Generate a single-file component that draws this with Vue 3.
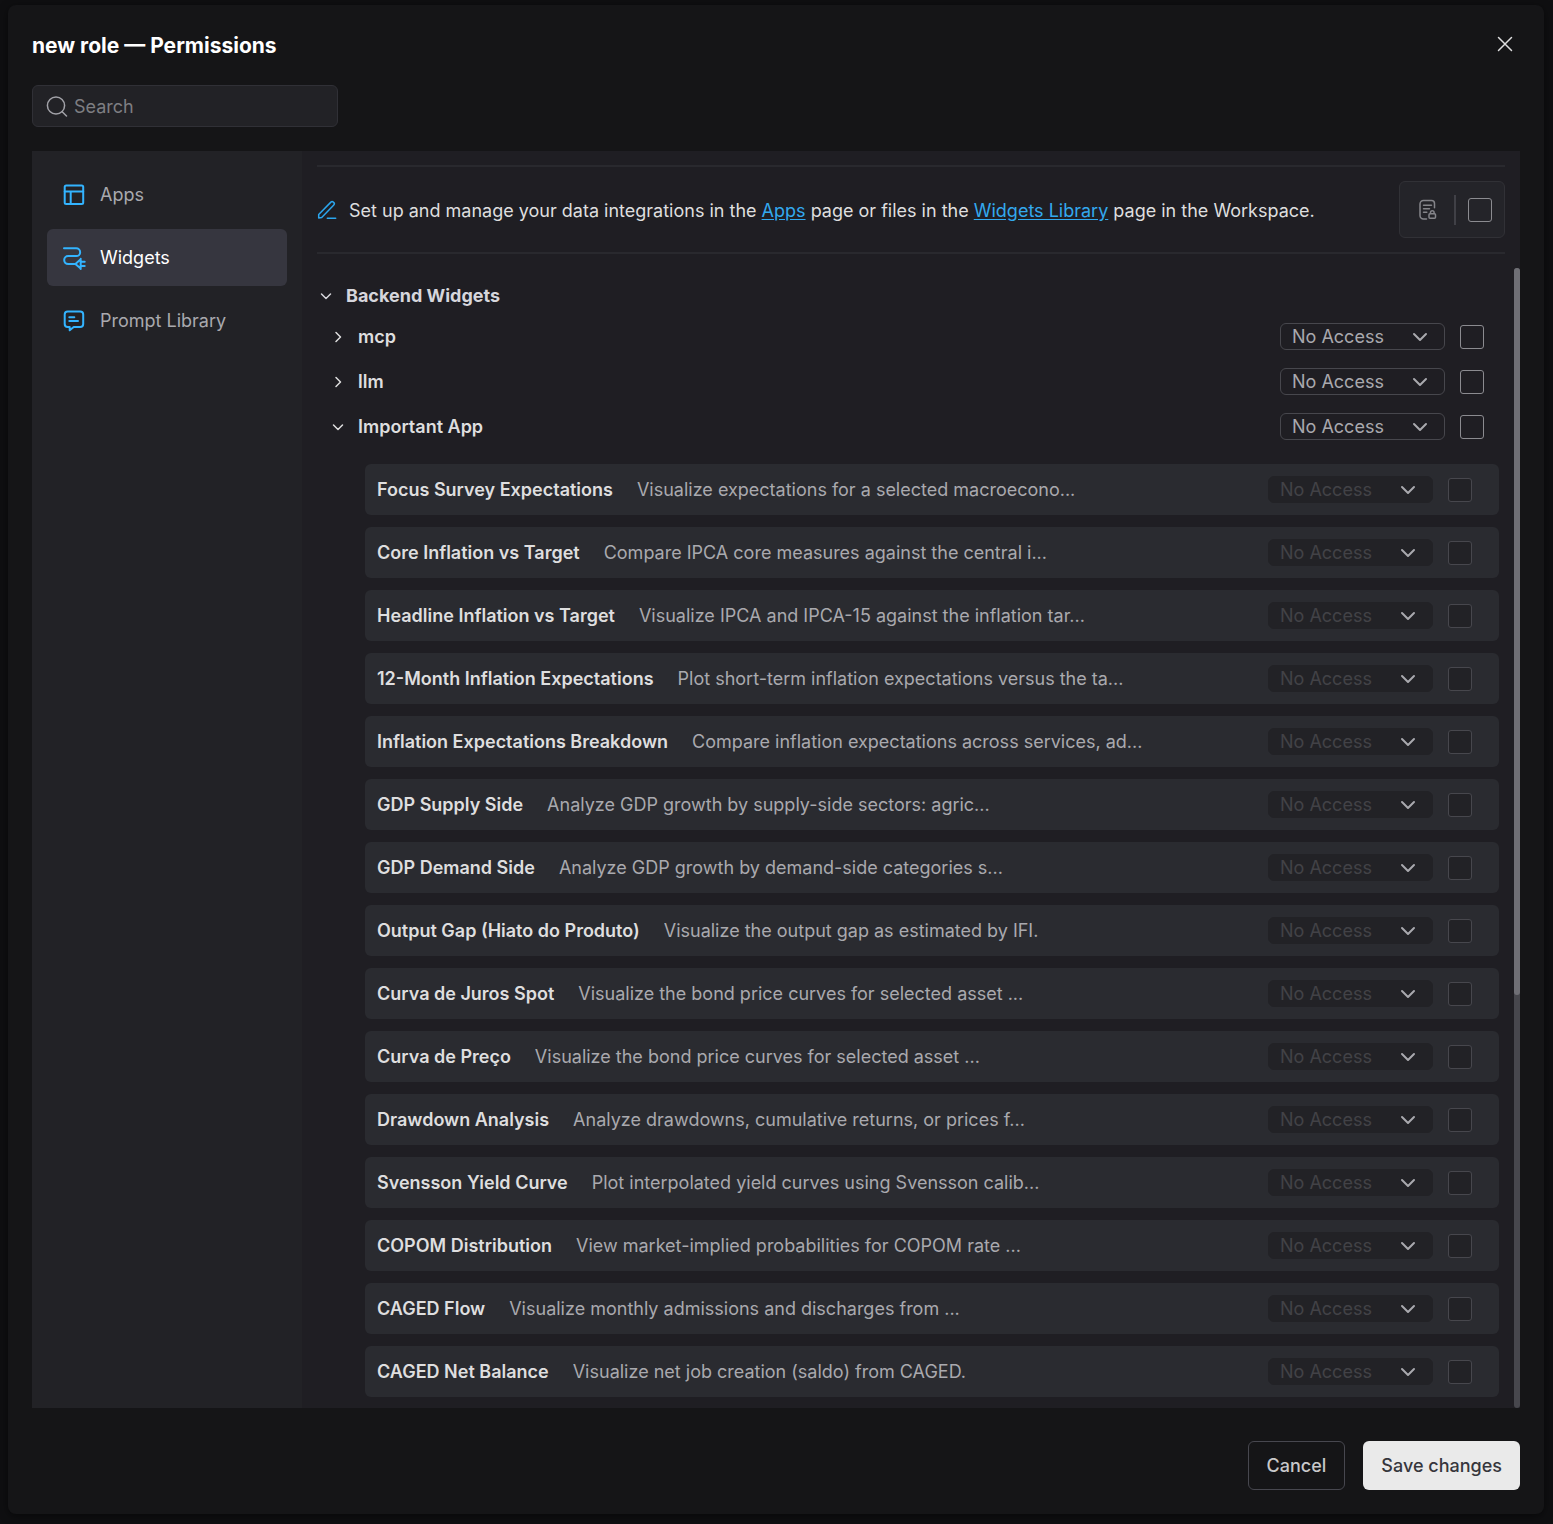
<script setup>
import { ref } from 'vue'

const search = ref( '' )
const activeTab = ref( 'widgets' )

const tabs = [
    { id: 'apps', label: 'Apps' },
    { id: 'widgets', label: 'Widgets' },
    { id: 'prompts', label: 'Prompt Library' }
]

const groups = ref( [
    { name: 'mcp', open: false, widgets: [] },
    { name: 'llm', open: false, widgets: [] },
    {
        name: 'Important App',
        open: true,
        widgets: [
            { name: 'Focus Survey Expectations', text: 'Visualize expectations for a selected macroecono...' },
            { name: 'Core Inflation vs Target', text: 'Compare IPCA core measures against the central i...' },
            { name: 'Headline Inflation vs Target', text: 'Visualize IPCA and IPCA-15 against the inflation tar...' },
            { name: '12-Month Inflation Expectations', text: 'Plot short-term inflation expectations versus the ta...' },
            { name: 'Inflation Expectations Breakdown', text: 'Compare inflation expectations across services, ad...' },
            { name: 'GDP Supply Side', text: 'Analyze GDP growth by supply-side sectors: agric...' },
            { name: 'GDP Demand Side', text: 'Analyze GDP growth by demand-side categories s...' },
            { name: 'Output Gap (Hiato do Produto)', text: 'Visualize the output gap as estimated by IFI.' },
            { name: 'Curva de Juros Spot', text: 'Visualize the bond price curves for selected asset ...' },
            { name: 'Curva de Preço', text: 'Visualize the bond price curves for selected asset ...' },
            { name: 'Drawdown Analysis', text: 'Analyze drawdowns, cumulative returns, or prices f...' },
            { name: 'Svensson Yield Curve', text: 'Plot interpolated yield curves using Svensson calib...' },
            { name: 'COPOM Distribution', text: 'View market-implied probabilities for COPOM rate ...' },
            { name: 'CAGED Flow', text: 'Visualize monthly admissions and discharges from ...' },
            { name: 'CAGED Net Balance', text: 'Visualize net job creation (saldo) from CAGED.' }
        ]
    }
] )
</script>

<template>
    <div class="page">
        <section class="modal" role="dialog" aria-labelledby="modal-title">
            <header class="modal-header">
                <h1 id="modal-title">new role — Permissions</h1>
                <button class="close" type="button" aria-label="Close">
                    <svg width="16" height="16" viewBox="0 0 16 16"><path d="M1.5 1.5l13 13M14.5 1.5l-13 13" /></svg>
                </button>
            </header>

            <label class="search">
                <svg width="22" height="22" viewBox="0 0 22 22">
                    <circle cx="10" cy="10.5" r="8.6" />
                    <path d="M16.2 16.7l4.3 4.3" />
                </svg>
                <input v-model="search" type="text" placeholder="Search" aria-label="Search" />
            </label>

            <div class="body">
                <nav class="sidebar">
                    <button
                        v-for="tab in tabs"
                        :key="tab.id"
                        type="button"
                        class="tab"
                        :class="{ active: activeTab === tab.id }"
                        @click="activeTab = tab.id"
                    >
                        <svg width="24" height="24" viewBox="0 0 24 24">
                            <template v-if="tab.id === 'apps'">
                                <rect x="2.7" y="2.5" width="18.5" height="18.5" rx="1.5" />
                                <path d="M2.7 8.5h18.5M8.7 8.5V21" />
                            </template>
                            <template v-else-if="tab.id === 'widgets'">
                                <path d="M2 2.200h12.200a3.700 3.700 0 0 1 0 7.900H6.200a3.900 3.900 0 0 0 0 8h7" />
                                <path d="M18.700 12.700v10.300M18.700 13.300l-5.300 4.600 5.300 4.600M18.700 15.800h4M18.700 20h4" />
                            </template>
                            <template v-else>
                                <path d="M5.700 2.500h12.500a3 3 0 0 1 3 3V15a3 3 0 0 1-3 3h-6.500l-4 3.300V18h-2a3 3 0 0 1-3-3V5.500a3 3 0 0 1 3-3z" />
                                <path d="M7.300 8.300h5M7.300 11.900h8.700" />
                            </template>
                        </svg>
                        {{ tab.label }}
                    </button>
                </nav>

                <main class="content">
                    <div class="notice">
                        <svg class="pen" width="20" height="20" viewBox="0 0 20 20">
                            <path d="M1.700 18v-3.500L13.900 2.100a1.700 1.700 0 0 1 2.400 0l.5.5a1.700 1.700 0 0 1 0 2.400L4.700 17.500 1.700 18z" />
                            <path d="M10.300 18.200h8.400" />
                        </svg>
                        <p>
                            Set up and manage your data integrations in the <a href="#apps">Apps</a> page or files in the
                            <a href="#widgets">Widgets Library</a> page in the Workspace.
                        </p>
                        <div class="bulk">
                            <button type="button" aria-label="Set access for all">
                                <svg width="20" height="22" viewBox="0 0 20 22">
                                    <path d="M8.500 20H5.500a3.500 3.500 0 0 1-3.500-3.500V5a3.500 3.500 0 0 1 3.500-3.500h8A3 3 0 0 1 16.500 4.500v4.300" />
                                    <path d="M5.500 6.300h8M5.500 9.800h6M5.500 13.300h3.300" />
                                    <rect x="11" y="14.800" width="6.500" height="4.500" rx="1" />
                                    <path d="M12.500 14.600v-1.100a1.800 1.800 0 0 1 3.600 0v1.100" />
                                </svg>
                            </button>
                            <span class="divider"></span>
                            <input type="checkbox" aria-label="Select all widgets" />
                        </div>
                    </div>

                    <div class="scroller">
                        <div class="tree">
                            <button class="toggle root" type="button">
                                <svg width="12" height="12" viewBox="0 0 12 12"><path d="M1.500 4L6 8.500 10.500 4" /></svg>
                                Backend Widgets
                            </button>

                            <section v-for="group in groups" :key="group.name">
                                <div class="group">
                                    <button class="toggle" type="button" @click="group.open = !group.open">
                                        <svg width="12" height="12" viewBox="0 0 12 12">
                                            <path :d="group.open ? 'M1.500 4L6 8.500 10.500 4' : 'M4 1.500L8.500 6 4 10.500'" />
                                        </svg>
                                        {{ group.name }}
                                    </button>
                                    <div class="controls">
                                        <span class="access">
                                            <select :aria-label="`${group.name} access`">
                                                <option>No Access</option>
                                            </select>
                                            <svg width="16" height="10" viewBox="0 0 16 10"><path d="M2 2l6 6 6-6" /></svg>
                                        </span>
                                        <input type="checkbox" :aria-label="`Select ${group.name}`" />
                                    </div>
                                </div>

                                <ul v-if="group.open && group.widgets.length" class="widgets">
                                    <li v-for="widget in group.widgets" :key="widget.name" class="widget">
                                        <strong>{{ widget.name }}</strong>
                                        <span class="description">{{ widget.text }}</span>
                                        <div class="controls">
                                            <span class="access">
                                                <select disabled :aria-label="`${widget.name} access`">
                                                    <option>No Access</option>
                                                </select>
                                                <svg width="16" height="10" viewBox="0 0 16 10"><path d="M2 2l6 6 6-6" /></svg>
                                            </span>
                                            <input type="checkbox" disabled :aria-label="`Select ${widget.name}`" />
                                        </div>
                                    </li>
                                </ul>
                            </section>
                        </div>
                        <div class="scrollbar"><div class="thumb"></div></div>
                    </div>
                </main>
            </div>

            <footer class="modal-footer">
                <button class="cancel" type="button">Cancel</button>
                <button class="save" type="button">Save changes</button>
            </footer>
        </section>
    </div>
</template>

<style>
body {
    margin: 0;
    background: #0f0f11;
}
</style>

<style scoped>
* {
    box-sizing: border-box;
}

.page {
    min-height: 100vh;
    padding: 5px 9px 11px 8px;
    font-family: Inter, "Liberation Sans", sans-serif;
    font-size: 18px;
    line-height: 24px;
    color: #dededf;
}

.modal {
    padding: 24px;
    border-radius: 8px;
    background: #151517;
    box-shadow: 0 2px 8px rgba(0, 0, 0, 0.5);
}

button,
input,
select {
    margin: 0;
    font: inherit;
    color: inherit;
}

button {
    padding: 0;
    border: 0;
    background: none;
    cursor: pointer;
}

svg {
    flex: none;
    fill: none;
    stroke: currentColor;
    stroke-linecap: round;
    stroke-linejoin: round;
}

.modal-header {
    display: flex;
    align-items: flex-start;
    justify-content: space-between;
    height: 32px;
    margin-bottom: 24px;
}

h1 {
    margin: 0;
    font-size: 21px;
    font-weight: 700;
    line-height: 34px;
    color: #fff;
}

.close {
    display: flex;
    padding: 7px;
    stroke-width: 1.5;
    color: #dededf;
}

.search {
    display: flex;
    align-items: center;
    gap: 6px;
    width: 306px;
    height: 42px;
    padding: 0 13px;
    border: 1px solid #303036;
    border-radius: 6px;
    background: #222226;
    color: #a2a2a8;
    stroke-width: 1.5;
}

.search input {
    min-width: 0;
    flex: 1;
    padding: 2px 0 0;
    border: 0;
    outline: 0;
    background: none;
}

.search input::placeholder {
    color: #7e7e82;
    opacity: 1;
}

.body {
    display: flex;
    margin: 24px 0 33px;
    background: #1f1e23;
}

.sidebar {
    display: flex;
    flex: none;
    flex-direction: column;
    gap: 6px;
    width: 270px;
    padding: 15px;
    background: #222226;
}

.tab {
    display: flex;
    align-items: center;
    gap: 14px;
    height: 57px;
    padding: 0 15px;
    border-radius: 6px;
    color: #a9a9ae;
}

.tab svg {
    color: #33b4ff;
    stroke-width: 2;
}

.tab.active {
    background: #36363f;
    color: #fff;
}

.content {
    display: flex;
    flex: 1;
    flex-direction: column;
    min-width: 0;
    padding-top: 14px;
}

.notice {
    display: flex;
    align-items: center;
    gap: 12px;
    margin: 0 15px;
    padding: 14px 0;
    border: solid #29292e;
    border-width: 2px 0;
}

.notice p {
    flex: 1;
    margin: 0;
    padding-top: 2px;
}

.notice a {
    color: #33a9ee;
    text-underline-offset: 2px;
}

.pen {
    color: #2ba6ee;
    stroke-width: 1.5;
}

.bulk {
    display: flex;
    align-items: center;
    gap: 12px;
    height: 57px;
    padding: 0 12px 0 18px;
    border: 1px solid #313136;
    border-radius: 6px;
    background: #242429;
}

.bulk button {
    display: flex;
    margin-right: 4px;
    color: #85858a;
    stroke-width: 1.5;
}

.divider {
    width: 2px;
    height: 30px;
    background: #404046;
}

input[type="checkbox"] {
    flex: none;
    width: 24px;
    height: 24px;
    appearance: none;
    border: 1px solid #8b8b90;
    border-radius: 3px;
}

input[type="checkbox"]:checked {
    background: #33b4ff;
}

input[type="checkbox"]:disabled {
    border-color: #47474d;
    background: #222226;
}

.scroller {
    display: flex;
    flex: 1;
    margin-top: 14px;
}

.tree {
    flex: 1;
    min-width: 0;
    padding: 10px 15px 11px 18px;
}

.toggle {
    display: flex;
    align-items: center;
    gap: 14px;
    font-weight: 600;
    stroke-width: 1.5;
}

.root {
    height: 36px;
    font-weight: 700;
    color: #d6d6dc;
}

.group {
    display: flex;
    align-items: center;
    justify-content: space-between;
    height: 45px;
    padding: 0 15px 0 12px;
}

.controls {
    display: flex;
    flex: none;
    align-items: center;
    gap: 15px;
}

.access {
    display: grid;
    align-items: center;
    width: 165px;
    color: #a9a9ae;
}

.access select,
.access svg {
    grid-area: 1 / 1;
}

.access svg {
    justify-self: end;
    margin-right: 17px;
    stroke-width: 2;
    pointer-events: none;
}

.access select {
    width: 100%;
    height: 27px;
    padding: 0 11px;
    appearance: none;
    border: 1px solid #47474d;
    border-radius: 6px;
    background: #1f1e23;
    line-height: 24px;
}

.access select:disabled {
    border-color: #222226;
    background: #222226;
    color: #424247;
    opacity: 1;
}

.widgets {
    display: flex;
    flex-direction: column;
    gap: 12px;
    margin: 15px 0 0 45px;
    padding: 0;
    list-style: none;
}

.widget {
    display: flex;
    align-items: center;
    gap: 24px;
    height: 51px;
    padding: 0 27px 0 12px;
    border-radius: 6px;
    background: #2a2b30;
}

.widget strong {
    font-weight: 600;
    white-space: nowrap;
}

.description {
    flex: 1;
    min-width: 0;
    overflow: hidden;
    color: #a9a9ae;
    text-overflow: ellipsis;
    white-space: nowrap;
}

.scrollbar {
    flex: none;
    width: 6px;
    border-radius: 3px;
    background: #47474d;
}

.thumb {
    height: 727px;
    border-radius: 3px;
    background: #6f6f75;
}

.modal-footer {
    display: flex;
    justify-content: flex-end;
    gap: 18px;
}

.modal-footer button {
    height: 49px;
    padding: 0 18px;
    border-radius: 6px;
    font-weight: 500;
}

.modal-footer .cancel {
    border: 1px solid #47474f;
    color: #c8c8ca;
}

.modal-footer .save {
    background: #eaeaea;
    color: #36363c;
}
</style>
